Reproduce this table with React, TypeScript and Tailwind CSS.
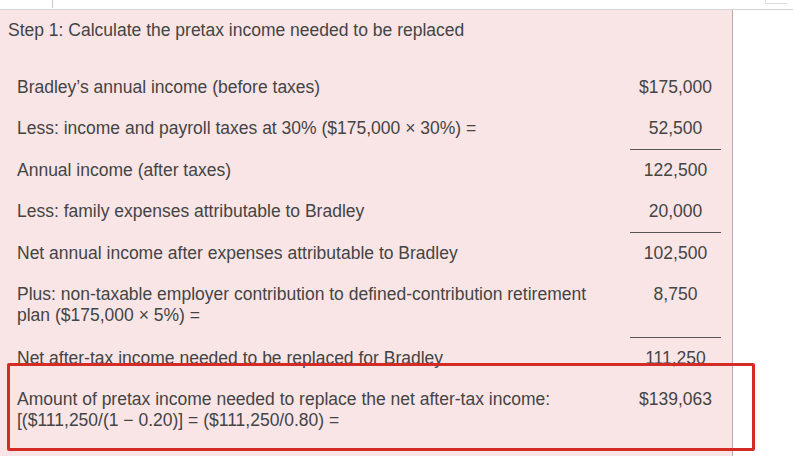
import React from 'react';

// One line in the worksheet: label on the left, amount centred in the right column
interface Row {
  label: React.ReactNode;
  amount: string;
  rule?: boolean; // line under the amount
  extraBottom?: boolean;
}

const rows: Row[] = [
  { label: "Bradley\u2019s annual income (before taxes)", amount: '$175,000' },
  { label: 'Less: income and payroll taxes at 30% ($175,000 \u00d7 30%) =', amount: '52,500', rule: true },
  { label: 'Annual income (after taxes)', amount: '122,500' },
  { label: 'Less: family expenses attributable to Bradley', amount: '20,000', rule: true },
  { label: 'Net annual income after expenses attributable to Bradley', amount: '102,500' },
  {
    label: (
      <>
        Plus: non-taxable employer contribution to defined-contribution retirement
        <br />
        plan ($175,000 × 5%) =
      </>
    ),
    amount: '8,750',
    rule: true,
    extraBottom: true,
  },
  { label: 'Net after-tax income needed to be replaced for Bradley', amount: '111,250' },
  {
    label: (
      <>
        Amount of pretax income needed to replace the net after-tax income:
        <br />
        [($111,250/(1 − 0.20)] = ($111,250/0.80) =
      </>
    ),
    amount: '$139,063',
  },
];

const App: React.FC = () => {
  return (
    <div className="relative w-[793px] h-[457px] overflow-hidden bg-white font-['Liberation_Sans',Arial,sans-serif] text-[17.5px] leading-[21px] text-[#444]">
      {/* top strip */}
      <div className="relative h-[10px] border-b border-[#d4d4d4]">
        <div className="absolute left-[52px] top-0 h-[8px] w-px bg-[#c8c8c8]" />
        <div className="absolute right-[6px] top-0 h-[4px] w-[22px] border-b border-l border-[#dcdcdc]" />
      </div>

      <div className="w-[733px] h-[446px] bg-[#f9e5e6] border-r border-[#b9a9aa] pt-[10px]">
        <div className="pl-[8px]">Step 1: Calculate the pretax income needed to be replaced</div>

        <div className="mt-[26px] flex flex-col">
          {rows.map((r, i) => (
            <div key={i} className="flex">
              <div className={`w-[630px] pl-[17px] whitespace-nowrap pt-[10px] ${r.extraBottom ? 'pb-[12px]' : 'pb-[10px]'}`}>
                {r.label}
              </div>
              <div
                className={`w-[91px] text-center pt-[10px] ${r.extraBottom ? 'pb-[12px]' : 'pb-[10px]'} ${
                  r.rule ? 'border-b-[1.5px] border-[#555]' : ''
                }`}
              >
                {r.amount}
              </div>
            </div>
          ))}
        </div>
      </div>

      {/* red highlight box */}
      <div className="absolute left-[7px] top-[363px] w-[748px] h-[88px] border-[3px] border-[#d42b25] rounded-[2px]" />
    </div>
  );
};

export default App;
